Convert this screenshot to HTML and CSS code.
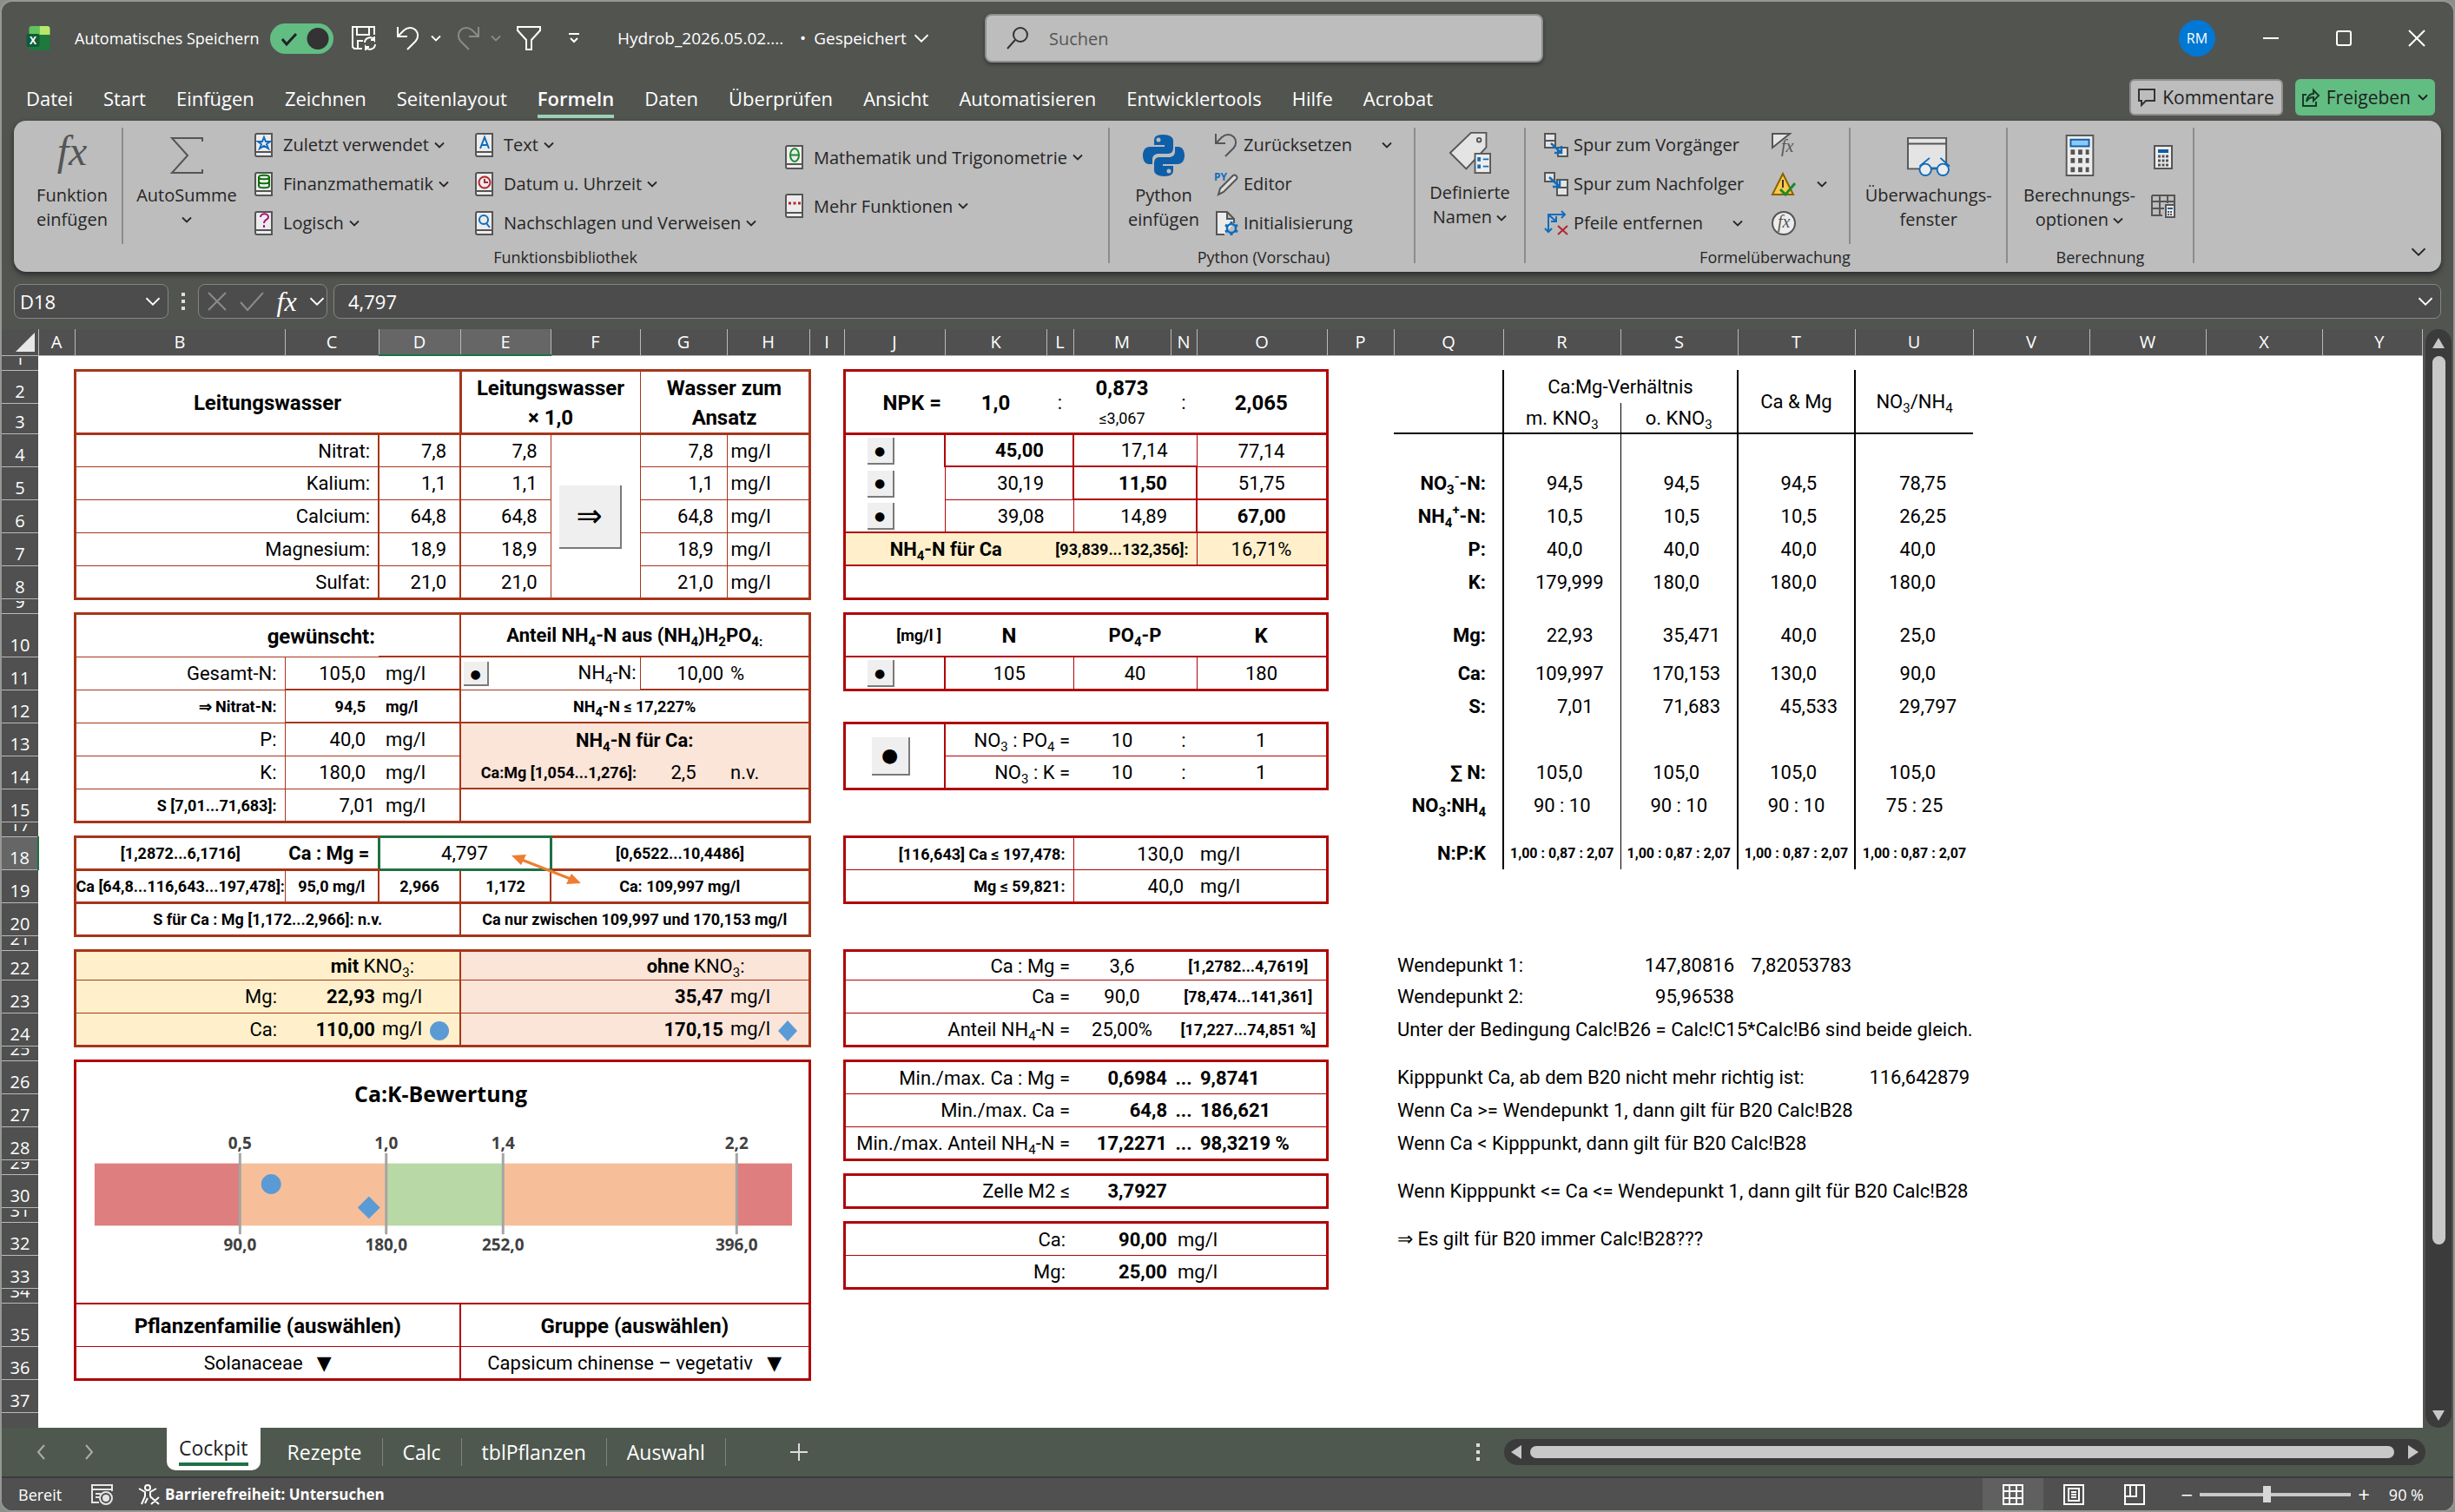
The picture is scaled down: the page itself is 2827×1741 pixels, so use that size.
FILE: index.html
```html
<!DOCTYPE html>
<html lang="de">

<head>
  <meta charset="UTF-8">
  <meta name="viewport" content="width=device-width, initial-scale=1.0">
  <title>Hydrob_2026.05.02</title>
  <link rel="stylesheet" href="styles.css">
</head>

<body>
  <!-- shared icons -->
  <svg class="defs" aria-hidden="true">
    <symbol id="chev" viewBox="0 0 12 12"><path d="M1 3.5l5 5 5-5" fill="none" stroke="currentColor" stroke-width="1.8" vector-effect="non-scaling-stroke" /></symbol>
    <symbol id="undo" viewBox="0 0 28 28"><path d="M2 1v11h11M2.500 11.500L9 5c4-4 10-4 13.500-.5s3.500 9 0 13L13 27" fill="none" stroke="currentColor" stroke-width="2" /></symbol>
    <symbol id="book" viewBox="0 0 22 28"><path d="M3 1h17v26H3a2 2 0 0 1-2-2V3a2 2 0 0 1 2-2z" fill="#ececec" stroke="#555" stroke-width="2" /><path d="M1.500 22H20" stroke="#555" stroke-width="2" /></symbol>
  </svg>

  <header id="titlebar">
    <svg class="logo" viewBox="0 0 27 28">
      <rect x="3" y="0" width="24" height="28" rx="3" fill="#1e7a3c" />
      <path d="M6 0h9v10H3V3a3 3 0 0 1 3-3z" fill="#5fc45c" />
      <path d="M15 0h9a3 3 0 0 1 3 3v7H15z" fill="#b7e86b" />
      <rect x="0" y="9" width="15" height="15" rx="2" fill="#0f5c3a" />
      <text x="7.500" y="21" text-anchor="middle" font-size="12" font-weight="700" fill="#fff">X</text>
    </svg>
    <label for="autosave" class="autosave">Automatisches Speichern</label>
    <span class="toggle">
      <input type="checkbox" id="autosave" checked>
      <svg viewBox="0 0 20 16"><path d="M2 8l5 6L18 2" fill="none" stroke="#222" stroke-width="3" /></svg>
    </span>
    <button class="icon save" aria-label="Speichern"><svg width="30" height="30" viewBox="0 0 30 30" fill="none" stroke="#fff" stroke-width="2"><path d="M13 27H4l-2-2V2h25v9M7 2v9h14V2M8 27v-9h6" /><path d="M16 20a6 6 0 0 1 11-3v-4M28 22a6 6 0 0 1-11 3v4M27 17h-4M17 25h4" /></svg></button>
    <button class="icon undo" aria-label="Rückgängig"><svg width="28" height="28"><use href="#undo" /></svg></button>
    <button class="icon small" aria-label="Rückgängig Liste"><svg width="12" height="12"><use href="#chev" /></svg></button>
    <button class="icon redo" aria-label="Wiederholen"><svg width="28" height="28"><use href="#undo" /></svg></button>
    <button class="icon small dim" aria-label="Wiederholen Liste"><svg width="12" height="12"><use href="#chev" /></svg></button>
    <button class="icon funnel" aria-label="Filter"><svg width="30" height="30" viewBox="0 0 30 30"><path d="M2 2h26v4L18 17v11h-6V17L2 6z" fill="none" stroke="#fff" stroke-width="2" /></svg></button>
    <button class="icon more" aria-label="Symbolleiste anpassen"><svg width="14" height="14" viewBox="0 0 14 14"><path d="M1 2h12M3 7l4 4 4-4" fill="none" stroke="#fff" stroke-width="2" /></svg></button>
    <span class="filename">Hydrob_2026.05.02....</span>
    <button class="saved"><span class="bullet">•</span>Gespeichert<svg width="18" height="18"><use href="#chev" /></svg></button>
    <div class="search">
      <svg width="28" height="28" viewBox="0 0 28 28"><circle cx="17" cy="10" r="8" fill="none" stroke="#333" stroke-width="2" /><path d="M11 16L2 26" stroke="#333" stroke-width="2" /></svg>
      <input type="text" placeholder="Suchen" aria-label="Suchen">
    </div>
    <div class="window-buttons">
      <span class="avatar">RM</span>
      <button class="icon" aria-label="Minimieren"><svg width="20" height="20" viewBox="0 0 20 20"><path d="M1 10h18" stroke="#fff" stroke-width="2" /></svg></button>
      <button class="icon" aria-label="Maximieren"><svg width="20" height="20" viewBox="0 0 20 20"><rect x="2" y="2" width="16" height="16" rx="2" fill="none" stroke="#fff" stroke-width="2" /></svg></button>
      <button class="icon" aria-label="Schließen"><svg width="20" height="20" viewBox="0 0 20 20"><path d="M1 1l18 18M19 1L1 19" stroke="#fff" stroke-width="2" /></svg></button>
    </div>
  </header>

  <nav id="menu">
    <a href="#">Datei</a>
    <a href="#">Start</a>
    <a href="#">Einfügen</a>
    <a href="#">Zeichnen</a>
    <a href="#">Seitenlayout</a>
    <a href="#" class="active">Formeln</a>
    <a href="#">Daten</a>
    <a href="#">Überprüfen</a>
    <a href="#">Ansicht</a>
    <a href="#">Automatisieren</a>
    <a href="#">Entwicklertools</a>
    <a href="#">Hilfe</a>
    <a href="#">Acrobat</a>
    <div class="share">
      <button class="comments"><svg width="20" height="22" viewBox="0 0 20 22"><path d="M1 2h18v13H9l-5 5v-5H1z" fill="none" stroke="#333" stroke-width="2" /></svg>Kommentare</button>
      <button class="release"><svg width="20" height="22" viewBox="0 0 20 22" fill="none" stroke="#1d3a2a" stroke-width="2"><path d="M5 8H1v13h15v-5M5 16c1-6 4-9 8-9V3l6 6-6 6v-4c-4 0-6 1-8 5z" /></svg>Freigeben<svg width="12" height="12"><use href="#chev" /></svg></button>
    </div>
  </nav>

  <section id="ribbon">
    <div class="group library">
      <div class="body">
        <button class="big fn"><svg width="46" height="46" viewBox="0 0 46 46"><text x="23" y="34" text-anchor="middle" class="fx-big">fx</text></svg><span>Funktion<br>einfügen</span></button>
        <button class="big sum"><svg width="46" height="46" viewBox="0 0 46 46"><path d="M41 7V3H6l18 20L6 43h35v-4" fill="none" stroke="#555" stroke-width="2" /></svg><span>AutoSumme</span><svg width="12" height="12"><use href="#chev" /></svg></button>
        <div class="col recent">
          <button><svg width="22" height="28"><use href="#book" /><path d="M11 5l2 5h5l-4 3 2 5-5-3-5 3 2-5-4-3h5z" fill="none" stroke="#0f6cbd" stroke-width="2" /></svg>Zuletzt verwendet<svg class="c" width="12" height="12"><use href="#chev" /></svg></button>
          <button><svg width="22" height="28"><use href="#book" /><path d="M5 6v10c0 3 12 3 12 0V6c0-3-12-3-12 0c0 3 12 3 12 0M5 11c0 3 12 3 12 0" fill="none" stroke="#0e700e" stroke-width="2" /></svg>Finanzmathematik<svg class="c" width="12" height="12"><use href="#chev" /></svg></button>
          <button><svg width="22" height="28"><use href="#book" /><path d="M7 7c0-5 9-5 9 0c0 3-5 3-5 7M11 16v3" fill="none" stroke="#a8127a" stroke-width="2" /></svg>Logisch<svg class="c" width="12" height="12"><use href="#chev" /></svg></button>
        </div>
        <div class="col textfn">
          <button><svg width="22" height="28"><use href="#book" /><path d="M6 18l5-13 5 13M8 14h6" fill="none" stroke="#0f6cbd" stroke-width="2" /></svg>Text<svg class="c" width="12" height="12"><use href="#chev" /></svg></button>
          <button><svg width="22" height="28"><use href="#book" /><circle cx="11" cy="12" r="6.500" fill="none" stroke="#b3262e" stroke-width="2" /><path d="M11 8v4h4" fill="none" stroke="#b3262e" stroke-width="2" /></svg>Datum u. Uhrzeit<svg class="c" width="12" height="12"><use href="#chev" /></svg></button>
          <button><svg width="22" height="28"><use href="#book" /><circle cx="10" cy="10" r="5" fill="none" stroke="#0f6cbd" stroke-width="2" /><path d="M13 14l4 5" stroke="#0f6cbd" stroke-width="2" /></svg>Nachschlagen und Verweisen<svg class="c" width="12" height="12"><use href="#chev" /></svg></button>
        </div>
        <div class="col two">
          <button><svg width="22" height="28"><use href="#book" /><ellipse cx="11" cy="11.500" rx="5" ry="7.500" fill="none" stroke="#1b8a2f" stroke-width="2" /><path d="M6 11.500h10" stroke="#1b8a2f" stroke-width="2" /></svg>Mathematik und Trigonometrie<svg class="c" width="12" height="12"><use href="#chev" /></svg></button>
          <button><svg width="22" height="28"><use href="#book" /><path d="M4 11h3M9.500 11h3M15 11h3" stroke="#b3262e" stroke-width="3" /></svg>Mehr Funktionen<svg class="c" width="12" height="12"><use href="#chev" /></svg></button>
        </div>
      </div>
      <p>Funktionsbibliothek</p>
    </div>

    <div class="group python">
      <div class="body">
        <button class="big"><svg width="48" height="48" viewBox="0 0 48 48" fill="#0f5ea8"><path d="M23 0c-8 0-10 3-10 7v5h12v2H8c-5 0-8 4-8 10s3 10 7 10h4v-5c0-5 3-7 7-7h11c4 0 6-3 6-6V7c0-4-4-7-12-7z" /><path d="M25 48c8 0 10-3 10-7v-5H23v-2h17c5 0 8-4 8-10s-3-10-7-10h-4v5c0 5-3 7-7 7H19c-4 0-6 3-6 6v9c0 4 4 7 12 7z" /><circle cx="18" cy="6" r="2.500" fill="#bdbdbd" /><circle cx="30" cy="42" r="2.500" fill="#bdbdbd" /><path d="M36 13v3c0 5-2 8-7 8H19c-5 0-7 3-7 8v3" fill="none" stroke="#bdbdbd" stroke-width="2" /></svg><span>Python<br>einfügen</span></button>
        <div class="col">
          <button><svg width="28" height="28" color="#555"><use href="#undo" /></svg>Zurücksetzen<svg class="c end" width="12" height="12"><use href="#chev" /></svg></button>
          <button><svg width="28" height="28" viewBox="0 0 28 28"><text x="0" y="10" class="py">PY</text><path d="M5 26l2-7L22 4c2-2 6 2 4 4L11 23z" fill="#ddd" stroke="#555" stroke-width="2" /></svg>Editor</button>
          <button><svg width="28" height="28" viewBox="0 0 28 28"><path d="M12 27H3V1h12l8 8v5M15 1v8h8" fill="#ececec" stroke="#555" stroke-width="2" /><circle cx="20" cy="20" r="5" fill="none" stroke="#0f6cbd" stroke-width="2.500" /><path d="M20 12v3M20 25v3M13 16l3 2M24 22l3 2M13 24l3-2M24 18l3-2" stroke="#0f6cbd" stroke-width="3" /></svg>Initialisierung</button>
        </div>
      </div>
      <p>Python (Vorschau)</p>
    </div>

    <div class="group names">
      <div class="body">
        <button class="big"><svg width="52" height="52" viewBox="0 0 52 52"><path d="M1 26L27 1h19v18L21 46z" fill="#e4e4e4" stroke="#555" stroke-width="2" /><circle cx="37" cy="10" r="2.500" fill="none" stroke="#555" stroke-width="2" /><rect x="32" y="27" width="19" height="24" fill="#ececec" stroke="#555" stroke-width="2" /><path d="M35 34h4M35 43h4" stroke="#0f6cbd" stroke-width="5" /><path d="M42 34h7M42 43h7" stroke="#0f6cbd" stroke-width="2" /></svg><span>Definierte<br>Namen <svg width="12" height="12"><use href="#chev" /></svg></span></button>
      </div>
    </div>

    <div class="group audit">
      <div class="body">
        <div class="col trace">
          <button><svg width="28" height="28" viewBox="0 0 28 28"><path d="M1 1h12v16H1zM1 9h12M16 17h11v10H16z" fill="#e4e4e4" stroke="#555" stroke-width="2" /><path d="M8 12l12 11M20 15v8h-8" fill="none" stroke="#0f6cbd" stroke-width="2.500" /></svg>Spur zum Vorgänger</button>
          <button><svg width="28" height="28" viewBox="0 0 28 28"><path d="M1 1h11v10H1zM15 9h12v18H15zM15 18h12" fill="#e4e4e4" stroke="#555" stroke-width="2" /><path d="M6 6l12 11M18 9v8h-8" fill="none" stroke="#0f6cbd" stroke-width="2.500" /></svg>Spur zum Nachfolger</button>
          <button><svg width="28" height="28" viewBox="0 0 28 28"><path d="M5 24V4h19M20 0l4 4-4 4M1 20l4 4 4-4M6 5l8 7M14 6v6H8" fill="none" stroke="#0f6cbd" stroke-width="2" /><path d="M16 17l11 10M27 17L16 27" stroke="#b3262e" stroke-width="2" /></svg>Pfeile entfernen<svg class="c end" width="12" height="12"><use href="#chev" /></svg></button>
        </div>
        <div class="col checks">
          <button aria-label="Formeln anzeigen"><svg width="28" height="28" viewBox="0 0 28 28"><path d="M1 17V1h20z" fill="#e4e4e4" stroke="#555" stroke-width="2" /><text x="11" y="22" class="fx">fx</text></svg></button>
          <button aria-label="Fehlerüberprüfung"><svg width="28" height="28" viewBox="0 0 28 28"><path d="M13 2l12 24H1z" fill="#ffc84a" stroke="#8a6100" stroke-width="2" /><path d="M13 9v9" stroke="#333" stroke-width="2" /><path d="M10 20l6 6L27 13" fill="none" stroke="#1b8a2f" stroke-width="3" /></svg><svg class="c" width="12" height="12"><use href="#chev" /></svg></button>
          <button aria-label="Formelauswertung"><svg width="28" height="28" viewBox="0 0 28 28"><circle cx="14" cy="14" r="13" fill="#ececec" stroke="#555" stroke-width="2" /><text x="7" y="19" class="fx">fx</text></svg></button>
        </div>
        <button class="big watch"><svg width="54" height="50" viewBox="0 0 54 50"><path d="M2 4h46v37H2z" fill="#e4e4e4" stroke="#555" stroke-width="2" /><path d="M2 11h46" stroke="#555" stroke-width="2" /><path d="M16 38l12-10M52 38L41 28" stroke="#0f6cbd" stroke-width="2" /><circle cx="23" cy="42" r="7" fill="#ececec" stroke="#0f6cbd" stroke-width="2" /><circle cx="44" cy="42" r="7" fill="#ececec" stroke="#0f6cbd" stroke-width="2" /><path d="M30 40h7" stroke="#0f6cbd" stroke-width="2" /></svg><span>Überwachungs-<br>fenster</span></button>
      </div>
      <p>Formelüberwachung</p>
    </div>

    <div class="group calc">
      <div class="body">
        <button class="big"><svg width="34" height="50" viewBox="0 0 34 50"><rect x="1" y="1" width="32" height="48" fill="#ececec" stroke="#555" stroke-width="2" /><rect x="6" y="6" width="22" height="8" fill="#8cc8f5" stroke="#0f5ea8" stroke-width="2" /><path d="M6 21h22M6 31h22M6 42h22" stroke="#555" stroke-width="6" stroke-dasharray="5 4" /></svg><span>Berechnungs-<br>optionen <svg width="12" height="12"><use href="#chev" /></svg></span></button>
        <div class="col two">
          <button aria-label="Neu berechnen"><svg width="28" height="28" viewBox="0 0 28 28"><rect x="4" y="1" width="20" height="26" fill="#ececec" stroke="#555" stroke-width="2" /><path d="M8 7h12" stroke="#0f5ea8" stroke-width="4" /><path d="M8 13h12M8 18h12M8 23h12" stroke="#555" stroke-width="3" stroke-dasharray="3 1.500" /></svg></button>
          <button aria-label="Blatt berechnen"><svg width="28" height="28" viewBox="0 0 28 28"><path d="M1 2h26v10M1 2v23h12M1 9h26M1 17h14M10 2v22M19 2v9" fill="none" stroke="#555" stroke-width="2" /><rect x="17" y="13" width="10" height="14" fill="#ececec" stroke="#555" stroke-width="2" /><path d="M19 17h6" stroke="#0f5ea8" stroke-width="2" /><path d="M19 21h6M19 24h6" stroke="#555" stroke-width="2" stroke-dasharray="2 1" /></svg></button>
        </div>
      </div>
      <p>Berechnung</p>
    </div>
    <button class="icon collapse" aria-label="Menüband ausblenden"><svg width="18" height="18"><use href="#chev" /></svg></button>
  </section>

  <section id="formula-bar">
    <div class="box name-box">
      <input type="text" value="D18" aria-label="Namenfeld">
      <svg width="18" height="18"><use href="#chev" /></svg>
    </div>
    <span class="grip"></span>
    <div class="box actions">
      <svg width="24" height="24" viewBox="0 0 24 24"><path d="M2 2l20 20M22 2L2 22" stroke="#8b8b8b" stroke-width="2" /></svg>
      <svg width="28" height="24" viewBox="0 0 28 24"><path d="M1 13l8 9L27 2" fill="none" stroke="#8b8b8b" stroke-width="2" /></svg>
      <i>fx</i>
      <svg width="18" height="18"><use href="#chev" /></svg>
    </div>
    <div class="box formula">
      <input type="text" value="4,797" aria-label="Bearbeitungsleiste">
      <svg width="18" height="18"><use href="#chev" /></svg>
    </div>
  </section>

  <main>
    <div id="sheet">
      <table>
        <colgroup>
          <col class="c-head"><col class="c-a"><col class="c-b"><col class="c-c"><col class="c-d"><col class="c-e"><col class="c-f"><col class="c-g"><col class="c-h"><col class="c-i"><col class="c-j"><col class="c-k"><col class="c-l"><col class="c-m"><col class="c-n"><col class="c-o"><col class="c-p"><col class="c-q"><col class="c-r"><col class="c-r"><col class="c-r"><col class="c-u"><col class="c-v"><col class="c-v"><col class="c-v"><col>
        </colgroup>
        <thead>
          <tr>
            <th><svg class="corner" viewBox="0 0 22 22"><path d="M22 0v22H0z" fill="#e8e8e8" /></svg></th>
            <th>A</th><th>B</th><th>C</th><th class="sel">D</th><th class="sel">E</th><th>F</th><th>G</th><th>H</th><th>I</th><th>J</th><th>K</th><th>L</th><th>M</th><th>N</th><th>O</th><th>P</th><th>Q</th><th>R</th><th>S</th><th>T</th><th>U</th><th>V</th><th>W</th><th>X</th><th class="last">Y</th>
          </tr>
        </thead>
        <tbody>
          <tr class="gap"><th><span>1</span></th><td colspan="25"></td></tr>
          <tr class="r37">
            <th>2</th><td></td>
            <td class="rust bt bl bb br b head" colspan="3" rowspan="2">Leitungswasser</td>
            <td class="rust bt bb b head two-line" colspan="2" rowspan="2">Leitungswasser<br>× 1,0</td>
            <td class="rust bt bb hl br b head two-line" colspan="2" rowspan="2">Wasser zum<br>Ansatz</td>
            <td></td>
            <td class="red bt bl bb b head r p4" rowspan="2">NPK =</td>
            <td class="red bt bb b head" rowspan="2">1,0</td>
            <td class="red bt bb" rowspan="2">:</td>
            <td class="red bt b head">0,873</td>
            <td class="red bt bb" rowspan="2">:</td>
            <td class="red bt bb br b head" rowspan="2">2,065</td>
            <td></td>
            <td class="ink kr"></td>
            <td colspan="2" class="ink kr">Ca:Mg-Verhältnis</td>
            <td class="ink kr kb" rowspan="2">Ca &amp; Mg</td>
            <td class="ink kb" rowspan="2">NO<sub>3</sub>/NH<sub>4</sub></td>
            <td colspan="4"></td>
          </tr>
          <tr class="r34">
            <th>3</th><td></td><td></td>
            <td class="red bb note">≤3,067</td>
            <td></td>
            <td class="ink kr kb"></td>
            <td class="ink hr kb">m. KNO<sub>3</sub></td>
            <td class="ink kr kb">o. KNO<sub>3</sub></td>
            <td colspan="4"></td>
          </tr>
          <tr>
            <th>4</th><td></td>
            <td class="rust bl hb r p10" colspan="2">Nitrat:</td><td class="rust ml mr hb r p16">7,8</td><td class="rust hb hr r p16">7,8</td>
            <td class="rust bb left send" rowspan="5"><button class="cell-btn arrow">⇒</button></td>
            <td class="rust hl hb r p16">7,8</td><td class="rust hl hb br left">mg/l</td>
            <td></td>
            <td class="red bl mr left dots"><button class="cell-btn">●</button></td><td class="red mb mr r p34 b" colspan="2">45,00</td><td class="red mb hr r p34" colspan="2">17,14</td><td class="red hb br">77,14</td>
            <td></td>
            <td class="ink kr"></td><td class="ink hr"></td><td class="ink kr"></td><td class="ink kr"></td><td></td><td colspan="4"></td>
          </tr>
          <tr>
            <th>5</th><td></td>
            <td class="rust bl hb r p10" colspan="2">Kalium:</td><td class="rust ml mr hb r p16">1,1</td><td class="rust hb hr r p16">1,1</td>
            <td class="rust hl hb r p16">1,1</td><td class="rust hl hb br left">mg/l</td>
            <td></td>
            <td class="red bl hr left dots"><button class="cell-btn">●</button></td><td class="red hb mr r p34" colspan="2">30,19</td><td class="red mb mr r p34 b" colspan="2">11,50</td><td class="red mb br">51,75</td>
            <td></td>
            <td class="ink kr b r p19">NO<sub>3</sub><sup>-</sup>-N:</td><td class="ink hr d1">94,5</td><td class="ink kr d1">94,5</td><td class="ink kr d1">94,5</td><td class="d2">78,75</td><td colspan="4"></td>
          </tr>
          <tr>
            <th>6</th><td></td>
            <td class="rust bl hb r p10" colspan="2">Calcium:</td><td class="rust ml mr hb r p16">64,8</td><td class="rust hb hr r p16">64,8</td>
            <td class="rust hl hb r p16">64,8</td><td class="rust hl hb br left">mg/l</td>
            <td></td>
            <td class="red bl hr mb left dots"><button class="cell-btn">●</button></td><td class="red mb hr r p34" colspan="2">39,08</td><td class="red mb mr r p34" colspan="2">14,89</td><td class="red mb br b">67,00</td>
            <td></td>
            <td class="ink kr b r p19">NH<sub>4</sub><sup>+</sup>-N:</td><td class="ink hr d1">10,5</td><td class="ink kr d1">10,5</td><td class="ink kr d1">10,5</td><td class="d2">26,25</td><td colspan="4"></td>
          </tr>
          <tr>
            <th>7</th><td></td>
            <td class="rust bl hb r p10" colspan="2">Magnesium:</td><td class="rust ml mr hb r p16">18,9</td><td class="rust hb hr r p16">18,9</td>
            <td class="rust hl hb r p16">18,9</td><td class="rust hl hb br left">mg/l</td>
            <td></td>
            <td class="red bl mb b yellow" colspan="2">NH<sub>4</sub>-N für Ca</td><td class="red mb hr s r p10 yellow" colspan="3">[93,839...132,356]:</td><td class="red mb br yellow">16,71%</td>
            <td></td>
            <td class="ink kr b r p19">P:</td><td class="ink hr d1">40,0</td><td class="ink kr d1">40,0</td><td class="ink kr d1">40,0</td><td class="d1">40,0</td><td colspan="4"></td>
          </tr>
          <tr>
            <th>8</th><td></td>
            <td class="rust bl bb r p10" colspan="2">Sulfat:</td><td class="rust ml mr bb r p16">21,0</td><td class="rust bb hr r p16">21,0</td>
            <td class="rust hl bb r p16">21,0</td><td class="rust hl bb br left">mg/l</td>
            <td></td>
            <td class="red bl bb br" colspan="6"></td>
            <td></td>
            <td class="ink kr b r p19">K:</td><td class="ink hr d3">179,999</td><td class="ink kr d1">180,0</td><td class="ink kr d1">180,0</td><td class="d1">180,0</td><td colspan="4"></td>
          </tr>
          <tr class="gap"><th><span>9</span></th><td colspan="16"></td><td class="ink kr"></td><td class="ink hr"></td><td class="ink kr"></td><td class="ink kr"></td><td colspan="5"></td></tr>
          <tr class="r50">
            <th>10</th><td></td>
            <td class="rust bt bl hb b head r p4" colspan="2">gewünscht:</td><td class="rust bt mr mb"></td>
            <td class="rust bt br mb b" colspan="4">Anteil NH<sub>4</sub>-N aus (NH<sub>4</sub>)H<sub>2</sub>PO<sub>4:</sub></td>
            <td></td>
            <td class="red bt bl mb s r p4">[mg/l ]</td><td class="red bt mb b head" colspan="2">N</td><td class="red bt mb b" colspan="2">PO<sub>4</sub>-P</td><td class="red bt br mb b head">K</td>
            <td></td>
            <td class="ink kr b r p19">Mg:</td><td class="ink hr d2">22,93</td><td class="ink kr d3">35,471</td><td class="ink kr d1">40,0</td><td class="d1">25,0</td><td colspan="4"></td>
          </tr>
          <tr>
            <th>11</th><td></td>
            <td class="rust bl hb hr r p10">Gesamt-N:</td><td class="rust mb r p16">105,0</td><td class="rust mb mr left p8">mg/l</td>
            <td class="rust hb hr r p4" colspan="2"><button class="cell-btn inset">●</button>NH<sub>4</sub>-N:</td><td class="rust mb r p4">10,00</td><td class="rust mb br left">%</td>
            <td></td>
            <td class="red bl bb mr left dots"><button class="cell-btn">●</button></td><td class="red bb hr" colspan="2">105</td><td class="red bb hr" colspan="2">40</td><td class="red bb br">180</td>
            <td></td>
            <td class="ink kr b r p19">Ca:</td><td class="ink hr d3">109,997</td><td class="ink kr d3">170,153</td><td class="ink kr d1">130,0</td><td class="d1">90,0</td><td colspan="4"></td>
          </tr>
          <tr>
            <th>12</th><td></td>
            <td class="rust bl hb hr s r p10">⇒ Nitrat-N:</td><td class="rust mb s r p16">94,5</td><td class="rust mb mr s left p8">mg/l</td>
            <td class="rust mb br s" colspan="4">NH<sub>4</sub>-N ≤ 17,227%</td>
            <td colspan="8"></td>
            <td class="ink kr b r p19">S:</td><td class="ink hr d2">7,01</td><td class="ink kr d3">71,683</td><td class="ink kr d3">45,533</td><td class="d3">29,797</td><td colspan="4"></td>
          </tr>
          <tr>
            <th>13</th><td></td>
            <td class="rust bl hb hr r p10">P:</td><td class="rust hb r p16">40,0</td><td class="rust hb mr left p8">mg/l</td>
            <td class="rust br b peach" colspan="4">NH<sub>4</sub>-N für Ca:</td>
            <td></td>
            <td class="red bt bl bb mr left send-all" rowspan="2"><button class="cell-btn large">●</button></td><td class="red bt hb r p4" colspan="2">NO<sub>3</sub> : PO<sub>4</sub> =</td><td class="red bt hb">10</td><td class="red bt hb">:</td><td class="red bt hb br">1</td>
            <td></td>
            <td class="ink kr"></td><td class="ink hr"></td><td class="ink kr"></td><td class="ink kr"></td><td></td><td colspan="4"></td>
          </tr>
          <tr>
            <th>14</th><td></td>
            <td class="rust bl hb hr r p10">K:</td><td class="rust hb r p16">180,0</td><td class="rust hb mr left p8">mg/l</td>
            <td class="rust mb s r p4 peach" colspan="2">Ca:Mg [1,054...1,276]:</td><td class="rust mb peach">2,5</td><td class="rust mb br left peach">n.v.</td>
            <td></td>
            <td class="red bb r p4" colspan="2">NO<sub>3</sub> : K =</td><td class="red bb">10</td><td class="red bb">:</td><td class="red bb br">1</td>
            <td></td>
            <td class="ink kr b r p19">∑ N:</td><td class="ink hr d1">105,0</td><td class="ink kr d1">105,0</td><td class="ink kr d1">105,0</td><td class="d1">105,0</td><td colspan="4"></td>
          </tr>
          <tr>
            <th>15</th><td></td>
            <td class="rust bl bb hr s r p10">S [7,01...71,683]:</td><td class="rust bb r p4">7,01</td><td class="rust bb mr left p8">mg/l</td>
            <td class="rust bb br" colspan="4"></td>
            <td colspan="8"></td>
            <td class="ink kr b r p19">NO<sub>3</sub>:NH<sub>4</sub></td><td class="ink hr">90 : 10</td><td class="ink kr">90 : 10</td><td class="ink kr">90 : 10</td><td>75 : 25</td><td colspan="4"></td>
          </tr>
          <tr class="gap"><th><span>17</span></th><td colspan="16"></td><td class="ink kr"></td><td class="ink hr"></td><td class="ink kr"></td><td class="ink kr"></td><td colspan="5"></td></tr>
          <tr>
            <th class="sel">18</th><td></td>
            <td class="rust bt bl bb s">[1,2872...6,1716]</td><td class="rust bt bb b r p10">Ca : Mg =</td>
            <td class="green" colspan="2">4,797<svg class="link-arrow" width="80" height="36" viewBox="0 0 80 36"><path d="M12 7l56 22" stroke="#ed7d31" stroke-width="3" /><path d="M0 2l17-1-6 12zM80 34l-17 1 6-12z" fill="#ed7d31" /></svg></td>
            <td class="rust bt bb br s" colspan="3">[0,6522...10,4486]</td>
            <td></td>
            <td class="red bt bl hb hr s r p10" colspan="3">[116,643] Ca ≤ 197,478:</td><td class="red bt hb r p16" colspan="2">130,0</td><td class="red bt hb br left">mg/l</td>
            <td></td>
            <td class="ink kr b r p19">N:P:K</td><td class="ink hr ratio">1,00 : 0,87 : 2,07</td><td class="ink kr ratio">1,00 : 0,87 : 2,07</td><td class="ink kr ratio">1,00 : 0,87 : 2,07</td><td class="ratio">1,00 : 0,87 : 2,07</td><td colspan="4"></td>
          </tr>
          <tr>
            <th>19</th><td></td>
            <td class="rust bl bb hr s">Ca [64,8...116,643...197,478]:</td><td class="rust bb mr s">95,0 mg/l</td><td class="rust bb mr s">2,966</td><td class="rust bb mr s">1,172</td>
            <td class="rust bb br s" colspan="3">Ca: 109,997 mg/l</td>
            <td></td>
            <td class="red bl bb hr s r p10" colspan="3">Mg ≤ 59,821:</td><td class="red bb r p16" colspan="2">40,0</td><td class="red bb br left">mg/l</td>
            <td colspan="10"></td>
          </tr>
          <tr>
            <th>20</th><td></td>
            <td class="rust bl bb mr s" colspan="3">S für Ca : Mg [1,172...2,966]: n.v.</td><td class="rust bb br s" colspan="4">Ca nur zwischen 109,997 und 170,153 mg/l</td>
            <td colspan="17"></td>
          </tr>
          <tr class="gap"><th><span>21</span></th><td colspan="25"></td></tr>
          <tr class="r34">
            <th>22</th><td></td>
            <td class="rust bt bl hb mr r p53 yellow" colspan="3"><b>mit</b> KNO<sub>3</sub>:</td><td class="rust bt hb br r p74 peach" colspan="4"><b>ohne</b> KNO<sub>3</sub>:</td>
            <td></td>
            <td class="red bt bl hb r p4" colspan="3">Ca : Mg =</td><td class="red bt hb">3,6</td><td class="red bt hb br s" colspan="2">[1,2782...4,7619]</td>
            <td></td>
            <td class="left" colspan="2">Wendepunkt 1:</td><td class="r p4">147,80816</td><td class="r p4">7,82053783</td><td></td><td colspan="4"></td>
          </tr>
          <tr>
            <th>23</th><td></td>
            <td class="rust bl hb r p10 yellow">Mg:</td><td class="rust hb b r p4 yellow">22,93</td><td class="rust hb mr left yellow">mg/l</td><td class="rust hb b r p4 peach" colspan="3">35,47</td><td class="rust hb br left peach">mg/l</td>
            <td></td>
            <td class="red bl hb r p4" colspan="3">Ca =</td><td class="red hb">90,0</td><td class="red hb br s" colspan="2">[78,474...141,361]</td>
            <td></td>
            <td class="left" colspan="2">Wendepunkt 2:</td><td class="r p4">95,96538</td><td></td><td></td><td colspan="4"></td>
          </tr>
          <tr>
            <th>24</th><td></td>
            <td class="rust bl bb r p10 yellow">Ca:</td><td class="rust bb b r p4 yellow">110,00</td><td class="rust bb mr left yellow">mg/l<svg class="mark" width="24" height="24"><circle cx="12" cy="12" r="11" fill="#5b9bd5" /></svg></td><td class="rust bb b r p4 peach" colspan="3">170,15</td><td class="rust bb br left peach">mg/l<svg class="mark" width="24" height="24"><path d="M12 0l11 12-11 12L1 12z" fill="#5b9bd5" /></svg></td>
            <td></td>
            <td class="red bl bb r p4" colspan="3">Anteil NH<sub>4</sub>-N =</td><td class="red bb">25,00%</td><td class="red bb br s" colspan="2">[17,227...74,851 %]</td>
            <td></td>
            <td class="left" colspan="9">Unter der Bedingung Calc!B26 = Calc!C15*Calc!B6 sind beide gleich.</td>
          </tr>
          <tr class="gap"><th><span>25</span></th><td colspan="25"></td></tr>
          <tr>
            <th>26</th><td></td>
            <td class="red bt bl br mb chart" colspan="7" rowspan="9">
              <svg viewBox="0 0 846 276" role="img" aria-label="Ca:K-Bewertung">
                <text x="421" y="44" class="title">Ca:K-Bewertung</text>
                <rect x="21" y="115" width="168" height="72" fill="#de7e7e" />
                <rect x="189" y="115" width="169" height="72" fill="#f6bf99" />
                <rect x="358" y="115" width="135" height="72" fill="#b8d8a6" />
                <rect x="493" y="115" width="270" height="72" fill="#f6bf99" />
                <rect x="763" y="115" width="64" height="72" fill="#de7e7e" />
                <path d="M189 103v94M358 103v94M493 103v94M763 103v94" stroke="#a5a5a5" stroke-width="3" />
                <circle cx="225" cy="139" r="11.500" fill="#5b9bd5" />
                <path d="M338 153l13 13-13 13-13-13z" fill="#5b9bd5" />
                <text x="189" y="98">0,5</text><text x="358" y="98">1,0</text><text x="493" y="98">1,4</text><text x="763" y="98">2,2</text>
                <text x="189" y="216">90,0</text><text x="358" y="216">180,0</text><text x="493" y="216">252,0</text><text x="763" y="216">396,0</text>
              </svg>
            </td>
            <td></td>
            <td class="red bt bl hb r p4" colspan="3">Min./max. Ca : Mg =</td><td class="red bt hb b r p4">0,6984</td><td class="red bt hb b">...</td><td class="red bt hb br b left">9,8741</td>
            <td></td>
            <td class="left" colspan="4">Kipppunkt Ca, ab dem B20 nicht mehr richtig ist:</td><td class="r p4">116,642879</td><td colspan="4"></td>
          </tr>
          <tr>
            <th>27</th><td></td><td></td>
            <td class="red bl hb r p4" colspan="3">Min./max. Ca =</td><td class="red hb b r p4">64,8</td><td class="red hb b">...</td><td class="red hb br b left">186,621</td>
            <td></td>
            <td class="left" colspan="9">Wenn Ca &gt;= Wendepunkt 1, dann gilt für B20 Calc!B28</td>
          </tr>
          <tr>
            <th>28</th><td></td><td></td>
            <td class="red bl bb r p4" colspan="3">Min./max. Anteil NH<sub>4</sub>-N =</td><td class="red bb b r p4">17,2271</td><td class="red bb b">...</td><td class="red bb br b left">98,3219 %</td>
            <td></td>
            <td class="left" colspan="9">Wenn Ca &lt; Kipppunkt, dann gilt für B20 Calc!B28</td>
          </tr>
          <tr class="gap"><th><span>29</span></th><td></td><td colspan="17"></td></tr>
          <tr>
            <th>30</th><td></td><td></td>
            <td class="red bt bl bb r p4" colspan="3">Zelle M2 ≤</td><td class="red bt bb b r p4">3,7927</td><td class="red bt bb br" colspan="2"></td>
            <td></td>
            <td class="left" colspan="9">Wenn Kipppunkt &lt;= Ca &lt;= Wendepunkt 1, dann gilt für B20 Calc!B28</td>
          </tr>
          <tr class="gap"><th><span>31</span></th><td></td><td colspan="17"></td></tr>
          <tr>
            <th>32</th><td></td><td></td>
            <td class="red bt bl hb r p10" colspan="3">Ca:</td><td class="red bt hb b r p4">90,00</td><td class="red bt hb br left p8" colspan="2">mg/l</td>
            <td></td>
            <td class="left" colspan="9">⇒ Es gilt für B20 immer Calc!B28???</td>
          </tr>
          <tr>
            <th>33</th><td></td><td></td>
            <td class="red bl bb r p10" colspan="3">Mg:</td><td class="red bb b r p4">25,00</td><td class="red bb br left p8" colspan="2">mg/l</td>
            <td colspan="10"></td>
          </tr>
          <tr class="gap"><th><span>34</span></th><td></td><td colspan="17"></td></tr>
          <tr class="r50">
            <th>35</th><td></td>
            <td class="red bl hb mr b head" colspan="3"><label for="family">Pflanzenfamilie (auswählen)</label></td><td class="red hb br b head" colspan="4"><label for="group">Gruppe (auswählen)</label></td>
            <td colspan="17"></td>
          </tr>
          <tr>
            <th>36</th><td></td>
            <td class="red bl bb mr" colspan="3"><select id="family"><option>Solanaceae</option></select><span class="tri">▼</span></td><td class="red bb br" colspan="4"><select id="group"><option>Capsicum chinense – vegetativ</option></select><span class="tri">▼</span></td>
            <td colspan="17"></td>
          </tr>
          <tr><th>37</th><td colspan="25"></td></tr>
          <tr><th>38</th><td colspan="25"></td></tr>
        </tbody>
      </table>
    </div>
    <div class="vscroll">
      <svg width="14" height="12" viewBox="0 0 14 12"><path d="M7 0l7 12H0z" fill="#c8c8c8" /></svg>
      <span class="thumb"></span>
      <svg width="14" height="12" viewBox="0 0 14 12"><path d="M7 12l7-12H0z" fill="#c8c8c8" /></svg>
    </div>
  </main>

  <section id="sheet-tabs">
    <button class="icon prev" aria-label="Vorheriges Blatt"><svg width="10" height="18" viewBox="0 0 10 18"><path d="M9 1L2 9l7 8" fill="none" stroke="#a9aea8" stroke-width="2" /></svg></button>
    <button class="icon next" aria-label="Nächstes Blatt"><svg width="10" height="18" viewBox="0 0 10 18"><path d="M1 1l7 8-7 8" fill="none" stroke="#a9aea8" stroke-width="2" /></svg></button>
    <button class="tab active"><span>Cockpit</span></button>
    <button class="tab">Rezepte</button>
    <button class="tab">Calc</button>
    <button class="tab">tblPflanzen</button>
    <button class="tab">Auswahl</button>
    <button class="icon add" aria-label="Neues Blatt"><svg width="20" height="20" viewBox="0 0 20 20"><path d="M10 0v20M0 10h20" stroke="#dcdcdc" stroke-width="2" /></svg></button>
    <span class="grip"></span>
    <div class="hscroll">
      <svg width="12" height="16" viewBox="0 0 12 16"><path d="M0 8l12-8v16z" fill="#c8c8c8" /></svg>
      <span class="thumb"></span>
      <svg width="12" height="16" viewBox="0 0 12 16"><path d="M12 8L0 0v16z" fill="#c8c8c8" /></svg>
    </div>
  </section>

  <footer>
    <span class="ready">Bereit</span>
    <svg width="26" height="24" viewBox="0 0 26 24" fill="none" stroke="#e6e6e6" stroke-width="2"><path d="M9 21H1V1h23v7M1 6h23M5 11h6M5 15h4" /><circle cx="17" cy="16" r="7" /><circle cx="17" cy="16" r="3" fill="#e6e6e6" /></svg>
    <svg class="access" width="26" height="24" viewBox="0 0 26 24" fill="none" stroke="#fff" stroke-width="2"><circle cx="11" cy="4" r="3" /><path d="M1 5l7 4v5L4 23M21 5l-7 4v4l1 3M8 22l3-6M15 15l9 8M24 15l-9 8" /></svg>
    <b>Barrierefreiheit: Untersuchen</b>
    <div class="views">
      <button class="on" aria-label="Normal"><svg width="24" height="24" viewBox="0 0 24 24"><path d="M1 1h22v22H1zM1 8h22M1 16h22M8 1v22M16 1v22" fill="none" stroke="#fff" stroke-width="2" /></svg></button>
      <button aria-label="Seitenlayout"><svg width="24" height="24" viewBox="0 0 24 24"><path d="M1 1h22v22H1zM6 5h12v14H6zM9 9h6M9 12h6M9 15h6" fill="none" stroke="#fff" stroke-width="2" /></svg></button>
      <button aria-label="Umbruchvorschau"><svg width="24" height="24" viewBox="0 0 24 24"><path d="M1 1h22v22H1zM1 14h13V1M7 1v13" fill="none" stroke="#fff" stroke-width="2" /></svg></button>
    </div>
    <span class="zoom-step">−</span>
    <input type="range" min="10" max="190" value="90" aria-label="Zoom">
    <span class="zoom-step">+</span>
    <span class="percent">90 %</span>
  </footer>
</body>

</html>
```
FILE: styles.css
```css
* {
  margin: 0;
  padding: 0;
  box-sizing: border-box;
}

body {
  display: flex;
  flex-direction: column;
  height: 100vh;
  overflow: hidden;
  border: 2px solid #969895;
  border-radius: 14px;
  background-color: #525450;
  color: #fff;
  font-family: 'Open Sans', 'Noto Sans', sans-serif;
  font-size: 20px;
}

html {
  background-color: #8b8f8a;
}

button,
input,
select {
  border: none;
  background: transparent;
  color: inherit;
  font: inherit;
  white-space: nowrap;
}

svg {
  flex: none;
  overflow: visible;
}

.defs {
  position: absolute;
  width: 0;
  height: 0;
}

.icon {
  display: flex;
}

/* title bar */
#titlebar {
  display: flex;
  align-items: center;
  height: 84px;
  padding-left: 28px;
  font-size: 19px;
}

.logo {
  width: 28px;
  height: 28px;
  margin-right: 28px;
}

.autosave {
  width: 225px;
  font-size: 18px;
  white-space: nowrap;
}

.toggle {
  position: relative;
  width: 73px;
  height: 35px;
  margin-right: 20px;
}

.toggle input {
  appearance: none;
  width: 73px;
  height: 35px;
  border-radius: 18px;
  background: radial-gradient(circle at 55px 50%, #333 12px, transparent 13px) #62bd83;
}

.toggle svg {
  position: absolute;
  left: 12px;
  top: 10px;
  width: 20px;
  height: 16px;
}

.save {
  margin-right: 22px;
}

.undo,
.redo {
  margin-right: 12px;
}

.redo svg {
  transform: scaleX(-1);
}

.redo,
.dim {
  color: #8a8b88;
}

.small {
  margin-right: 17px;
}

.funnel {
  margin-right: 30px;
}

.more {
  margin-right: 43px;
}

.filename {
  width: 210px;
  white-space: nowrap;
}

.saved {
  display: flex;
  align-items: center;
  width: 213px;
}

.saved svg {
  margin-left: 8px;
}

.bullet {
  margin-right: 9px;
}

.search {
  display: flex;
  align-items: center;
  flex: 0 1 643px;
  gap: 22px;
  height: 56px;
  padding-left: 22px;
  border: 2px solid #8f8f8f;
  border-radius: 8px;
  background-color: #bdbdbd;
  box-shadow: 0 2px 4px rgba(0, 0, 0, 0.4);
  font-size: 20px;
}

.search input {
  flex: 1;
  color: #333;
}

.search input::placeholder {
  color: #555;
}

.window-buttons {
  display: flex;
  align-items: center;
  gap: 64px;
  margin-left: auto;
  padding-right: 32px;
}

.avatar {
  width: 42px;
  height: 42px;
  margin-right: -10px;
  border-radius: 50%;
  background-color: #0078d4;
  font-size: 16px;
  line-height: 42px;
  text-align: center;
}

/* menu */
#menu {
  display: flex;
  align-items: center;
  gap: 35px;
  height: 52px;
  padding-left: 28px;
  font-size: 22px;
}

#menu a {
  height: 48px;
  border-bottom: 4px solid transparent;
  color: #fff;
  line-height: 50px;
  text-decoration: none;
  white-space: nowrap;
}

#menu a.active {
  border-color: #9bd3b4;
  font-weight: 600;
}

.share {
  display: flex;
  gap: 14px;
  margin-left: auto;
  padding-right: 21px;
  font-size: 21px;
}

.share button {
  display: flex;
  align-items: center;
  gap: 8px;
  height: 42px;
  padding: 0 8px;
  border-radius: 6px;
  color: #1f1f1f;
}

.share .comments {
  border: 2px solid #8f8f8f;
  background-color: #bdbdbd;
}

.share .release {
  background-color: #62bd83;
}

/* ribbon */
#ribbon {
  position: relative;
  display: flex;
  height: 174px;
  margin: 1px 14px 0;
  padding: 8px 0 10px;
  border-radius: 14px;
  background-color: #bdbdbd;
  box-shadow: 0 3px 6px rgba(0, 0, 0, 0.5);
  color: #262626;
  font-size: 20px;
}

.group {
  display: flex;
  flex-direction: column;
  justify-content: space-between;
  border-right: 2px solid #8c8c8c;
}

.group p {
  font-size: 18px;
  line-height: 14px;
  text-align: center;
}

.body {
  display: flex;
  height: 134px;
}

.library {
  width: 1262px;
  padding-left: 10px;
}

.python {
  width: 352px;
  padding-left: 4px;
}

.names {
  width: 127px;
}

.audit {
  width: 555px;
  padding-left: 21px;
}

.calc {
  width: 215px;
}

.big {
  display: flex;
  flex-direction: column;
  align-items: center;
  gap: 8px;
  width: 116px;
  padding-top: 8px;
  line-height: 28px;
}

.big > svg:first-child {
  height: 48px;
}

.names .big {
  width: 125px;
  padding-top: 5px;
}

.fn {
  border-right: 2px solid #8c8c8c;
}

.sum {
  width: 146px;
}

.watch {
  width: 182px;
  border-left: 2px solid #8c8c8c;
}

.calc .big {
  width: 165px;
}

.col {
  margin-top: -3px;
}

.col button {
  display: flex;
  align-items: center;
  gap: 6px;
  width: 100%;
  height: 45px;
}

.two {
  padding-top: 9px;
}

.col.two button {
  height: 56px;
}

.library .col button {
  gap: 11px;
}

.col .c,
.library .col .c {
  margin-left: -5px;
}

.col .c.end {
  margin-left: auto;
}

.recent {
  width: 259px;
  padding-left: 5px;
}

.textfn {
  width: 357px;
}

.python .col {
  width: 205px;
}

.trace {
  width: 229px;
}

.checks {
  width: 123px;
  padding-left: 33px;
}

.checks .c {
  margin-left: 18px;
}

.fx-big {
  fill: #555;
  font: italic 48px 'Liberation Serif', serif;
}

.fx {
  fill: #555;
  font: italic 20px 'Liberation Serif', serif;
}

.py {
  fill: #0f6cbd;
  font-size: 12px;
  font-weight: 700;
}

.collapse {
  position: absolute;
  right: 17px;
  bottom: 14px;
}

/* formula bar */
#formula-bar {
  display: flex;
  align-items: center;
  padding: 14px 14px 12px;
  font-size: 22px;
}

.box {
  display: flex;
  align-items: center;
  height: 40px;
  padding: 0 8px 0 6px;
  border: 1px solid #858585;
  border-radius: 8px;
  background-color: #4c4c4c;
}

.name-box {
  width: 178px;
}

.box input {
  flex: 1;
  min-width: 0;
}

.grip {
  width: 4px;
  height: 20px;
  margin: 0 15px;
  background: repeating-linear-gradient(#dedede 0 4px, transparent 4px 8px);
}

.actions {
  justify-content: space-between;
  width: 149px;
  margin-right: 7px;
  padding: 0 2px 0 9px;
}

.actions i {
  font: italic 32px 'Liberation Serif', serif;
}

.formula {
  flex: 1;
  padding-left: 16px;
}

/* spreadsheet */
main {
  display: flex;
  flex: 1;
  min-height: 0;
}

#sheet {
  flex: 1;
  min-width: 0;
  overflow: hidden;
  background-color: #fff;
  color: #000;
  font-family: Roboto, 'Liberation Sans', sans-serif;
  font-size: 22px;
  line-height: 26px;
}

table {
  width: 100%;
  border-collapse: collapse;
  table-layout: fixed;
}

.c-head, .c-a { width: 42px; }
.c-b { width: 242px; }
.c-c { width: 108px; }
.c-d { width: 94px; }
.c-e { width: 104px; }
.c-f { width: 103px; }
.c-g { width: 100px; }
.c-h { width: 95px; }
.c-i { width: 40px; }
.c-j { width: 116px; }
.c-k { width: 117px; }
.c-l { width: 31px; }
.c-m { width: 112px; }
.c-n { width: 30px; }
.c-o { width: 150px; }
.c-p { width: 77px; }
.c-q { width: 126px; }
.c-r { width: 135px; }
.c-u { width: 136px; }
.c-v { width: 134px; }

tr { height: 38px; }
thead tr { height: 30px; }
.gap { height: 17px; }
.r34 { height: 34px; }
.r37 { height: 37px; }
.r50 { height: 50px; }

th {
  border-right: 1px solid #b9b9b9;
  border-bottom: 1px solid #b9b9b9;
  background-color: #505050;
  color: #fff;
  font-family: 'Open Sans', sans-serif;
  font-size: 20px;
  font-weight: 400;
}

.last {
  padding-left: 16px;
}

tbody th {
  border-right: none;
  vertical-align: bottom;
}

th.sel {
  background-color: #666;
}

thead th.sel {
  border-bottom: 2px solid #1e7145;
}

tbody th.sel {
  border-right: 2px solid #1e7145;
}

/* hidden part of a row that is too low for its number */
.gap th span {
  display: flex;
  align-items: flex-end;
  justify-content: center;
  height: 14px;
  overflow: hidden;
}

.corner {
  display: block;
  width: 22px;
  height: 22px;
  margin-left: 16px;
}

td {
  padding-top: 2px;
  text-align: center;
  white-space: nowrap;
}

sub,
sup {
  font-size: 15px;
  line-height: 0;
}

sub { vertical-align: -5px; }
sup { vertical-align: 10px; }

.b { font-weight: 700; }
.head { font-size: 24px; }
.s { font-size: 18px; font-weight: 700; }
.note { font-size: 18px; }
.ratio { font-size: 16px; font-weight: 700; }

.r { text-align: right; }
.left { padding-left: 4px; text-align: left; }
.left.p8 { padding-left: 8px; }
.r.p4 { padding-right: 4px; }
.r.p10 { padding-right: 9px; }
.r.p16 { padding-right: 15px; }
.r.p19 { padding-right: 19px; }
.r.p34 { padding-right: 33px; }
.r.p53 { padding-right: 52px; }
.r.p74 { padding-right: 73px; }
.two-line { line-height: 34px; }

/* numbers lined up on the comma */
.d1, .d2, .d3 { text-align: right; }
.d1 { padding-right: 43px; }
.d2 { padding-right: 31px; }
.d3 { padding-right: 19px; }

/* borders: b = thick, m = medium, h = hairline, k = black */
.rust { border-color: #a8351a; }
.red { border-color: #b00408; }
.ink { border-color: #000; }
.bt { border-top-style: solid; border-top-width: 3px; }
.bb { border-bottom-style: solid; border-bottom-width: 3px; }
.bl { border-left-style: solid; border-left-width: 3px; }
.br { border-right-style: solid; border-right-width: 3px; }
.mb, .kb { border-bottom-style: solid; border-bottom-width: 2px; }
.ml { border-left-style: solid; border-left-width: 2px; }
.mr, .kr { border-right-style: solid; border-right-width: 2px; }
.hb { border-bottom-style: solid; border-bottom-width: 1px; }
.hl { border-left-style: solid; border-left-width: 1px; }
.hr { border-right-style: solid; border-right-width: 1px; }

.green {
  position: relative;
  border: 3px double #1e7145;
  border-style: solid;
}

.yellow { background-color: #fff0cb; }
.peach { background-color: #fbe4d8; }

.cell-btn {
  width: 31px;
  height: 31px;
  border-right: 2px solid #7a7a7a;
  border-bottom: 2px solid #7a7a7a;
  background-color: #efefef;
  font-family: 'DejaVu Sans', sans-serif;
  font-size: 14px;
  line-height: 28px;
  vertical-align: middle;
}

.dots { padding-left: 25px; }
.send { padding-left: 9px; }
.send-all { padding-left: 30px; }

.arrow {
  width: 72px;
  height: 73px;
  font-size: 36px;
}

.large {
  width: 44px;
  height: 44px;
  font-size: 22px;
}

.inset {
  float: left;
  width: 29px;
  height: 28px;
  margin-left: 3px;
}

.mark {
  margin-left: 8px;
  vertical-align: middle;
}

.link-arrow {
  position: absolute;
  right: -36px;
  top: 18px;
}

.chart svg {
  display: block;
  width: 100%;
  font-family: 'Open Sans', sans-serif;
}

.chart text {
  fill: #404040;
  font-size: 19px;
  font-weight: 700;
  text-anchor: middle;
}

.chart .title {
  fill: #000;
  font-size: 25px;
}

select {
  appearance: none;
}

.tri {
  margin-left: 16px;
  font-family: 'DejaVu Sans', sans-serif;
}

/* scrollbars */
.vscroll {
  display: flex;
  flex-direction: column;
  align-items: center;
  gap: 9px;
  width: 30px;
  margin: 0 2px 0 3px;
  padding: 10px 0 8px;
  border-radius: 15px;
  background-color: #3b3b3b;
}

.vscroll .thumb {
  width: 15px;
  height: 82%;
  margin-bottom: auto;
  border-radius: 8px;
  background-color: #c8c8c8;
}

.hscroll {
  display: flex;
  align-items: center;
  gap: 10px;
  flex: 0 1 1061px;
  height: 30px;
  padding: 0 8px;
  border-radius: 15px;
  background-color: #3b3b3b;
}

.hscroll .thumb {
  flex: 1;
  height: 14px;
  margin-right: 6px;
  border-radius: 7px;
  background-color: #c8c8c8;
}

/* sheet tabs */
#sheet-tabs {
  display: flex;
  align-items: center;
  height: 56px;
  padding: 0 32px 0 40px;
  background-color: #4f584e;
  font-size: 23px;
}

.prev { margin-right: 46px; }
.next { margin-right: 84px; }

.tab {
  height: 32px;
  padding: 0 23px;
  border-right: 1px solid #7d857c;
  line-height: 32px;
}

.tab.active {
  align-self: flex-start;
  height: 49px;
  margin-right: 8px;
  padding: 0 14px;
  border-right: none;
  border-radius: 0 0 10px 10px;
  background-color: #fff;
  color: #222;
}

.tab.active span {
  display: block;
  border-bottom: 4px solid #1e7145;
  line-height: 34px;
}

.add {
  margin-left: 74px;
}

#sheet-tabs .grip {
  margin: 0 28px 0 auto;
}

/* status bar */
footer {
  display: flex;
  align-items: center;
  height: 39px;
  padding: 0 34px 0 19px;
  border-top: 2px solid #3b3b3b;
  background-color: #505050;
  font-size: 18px;
}

footer b { font-size: 17px; }
.ready { width: 84px; }
.access { margin: 0 5px 0 28px; }

.views {
  display: flex;
  margin-left: auto;
  margin-right: 18px;
}

.views button {
  display: flex;
  align-items: center;
  justify-content: center;
  width: 70px;
  height: 37px;
}

.views .on {
  background-color: #606060;
}

.zoom-step {
  font-size: 24px;
  line-height: 30px;
}

footer input {
  appearance: none;
  width: 174px;
  height: 4px;
  margin: 0 8px;
  background-color: #c8c8c8;
}

footer input::-webkit-slider-thumb {
  appearance: none;
  width: 9px;
  height: 19px;
  background-color: #d8d8d8;
}

.percent {
  margin-left: 22px;
  white-space: nowrap;
}
```
